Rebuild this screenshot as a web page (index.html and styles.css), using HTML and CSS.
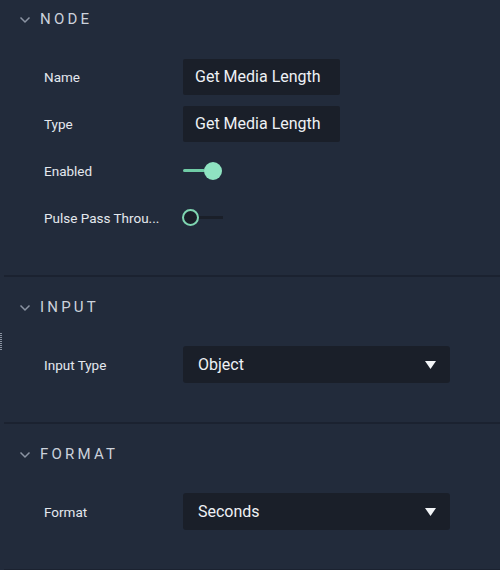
FILE: index.html
```html
<!DOCTYPE html>
<html>
<head>
<meta charset="utf-8">
<link rel="stylesheet" href="styles.css">
</head>
<body>
<div class="panel">
  <div class="grip"></div>
  <section class="section first">
    <div class="header">
      <svg class="chev" width="12" height="8" viewBox="0 0 12 8"><path d="M1.5 1.5 L6 6 L10.5 1.5" fill="none" stroke="#8b94a3" stroke-width="1.5"/></svg>
      <span class="title">NODE</span>
    </div>
    <div class="row">
      <div class="label">Name</div>
      <div class="field">Get Media Length</div>
    </div>
    <div class="row">
      <div class="label">Type</div>
      <div class="field">Get Media Length</div>
    </div>
    <div class="row">
      <div class="label">Enabled</div>
      <div class="toggle on"><span class="track"></span><span class="thumb"></span></div>
    </div>
    <div class="row">
      <div class="label">Pulse Pass Throu...</div>
      <div class="toggle off"><span class="thumb"></span><span class="track"></span></div>
    </div>
  </section>
  <section class="section">
    <div class="header">
      <svg class="chev" width="12" height="8" viewBox="0 0 12 8"><path d="M1.5 1.5 L6 6 L10.5 1.5" fill="none" stroke="#8b94a3" stroke-width="1.5"/></svg>
      <span class="title">INPUT</span>
    </div>
    <div class="row">
      <div class="label">Input Type</div>
      <div class="select"><span>Object</span><svg width="11" height="8" viewBox="0 0 11 8"><path d="M0 0 H11 L5.5 8 Z" fill="#f2f4f7"/></svg></div>
    </div>
  </section>
  <section class="section">
    <div class="header">
      <svg class="chev" width="12" height="8" viewBox="0 0 12 8"><path d="M1.5 1.5 L6 6 L10.5 1.5" fill="none" stroke="#8b94a3" stroke-width="1.5"/></svg>
      <span class="title">FORMAT</span>
    </div>
    <div class="row">
      <div class="label">Format</div>
      <div class="select"><span>Seconds</span><svg width="11" height="8" viewBox="0 0 11 8"><path d="M0 0 H11 L5.5 8 Z" fill="#f2f4f7"/></svg></div>
    </div>
  </section>
</div>
</body>
</html>
```

FILE: styles.css
```css
html, body {
  margin: 0;
  padding: 0;
  background: #222b3b;
}
body {
  width: 500px;
  height: 570px;
  overflow: hidden;
  font-family: Roboto, "Liberation Sans", sans-serif;
  color: #e8ebf0;
}
.panel {
  position: relative;
  display: flex;
  flex-direction: column;
}
.grip {
  position: absolute;
  left: 0;
  top: 333px;
  width: 2px;
  height: 18px;
  background: repeating-linear-gradient(to bottom, #8a93a1 0 1px, transparent 1px 2px);
}
.section {
  display: flex;
  flex-direction: column;
  padding: 10px 0 34px 0;
  margin-left: 4px;
  border-bottom: 2px solid #1b2230;
}
.section.first {
  padding-top: 0;
  padding-bottom: 34px;
  margin-top: -1px;
}
.header {
  height: 40px;
  display: flex;
  align-items: center;
  padding-left: 15px;
  margin-bottom: 14px;
}
.chev {
  margin-right: 9px;
  margin-top: 1px;
}
.title {
  font-size: 15px;
  letter-spacing: 3.2px;
  color: #ccd2db;
  font-weight: 400;
}
.row {
  height: 47px;
  display: flex;
  align-items: center;
  padding-left: 40px;
}
.label {
  width: 139px;
  font-size: 13.5px;
  color: #e4e8ee;
}
.field {
  width: 157px;
  height: 36px;
  box-sizing: border-box;
  padding-left: 12px;
  display: flex;
  align-items: center;
  background: #1a1f29;
  border-radius: 2px;
  font-size: 16px;
  color: #eef1f5;
}
.select {
  width: 267px;
  height: 37px;
  box-sizing: border-box;
  padding: 0 14px 0 15px;
  display: flex;
  align-items: center;
  justify-content: space-between;
  background: #1a1f29;
  border-radius: 3px;
  font-size: 16px;
  color: #eef1f5;
}
.toggle {
  display: flex;
  align-items: center;
  width: 40px;
  height: 20px;
}
.toggle.on .track {
  width: 22px;
  height: 3px;
  background: #70cca6;
  border-radius: 2px;
}
.toggle.on .thumb {
  width: 18px;
  height: 18px;
  border-radius: 50%;
  background: #8fe3c1;
  margin-left: -1px;
}
.toggle.off .thumb {
  width: 17px;
  height: 17px;
  box-sizing: border-box;
  border-radius: 50%;
  border: 2px solid #7fd6b2;
  background: #1a1f29;
  margin-left: -1px;
}
.toggle.off .track {
  width: 24px;
  height: 3px;
  background: #1a1f29;
}
```
